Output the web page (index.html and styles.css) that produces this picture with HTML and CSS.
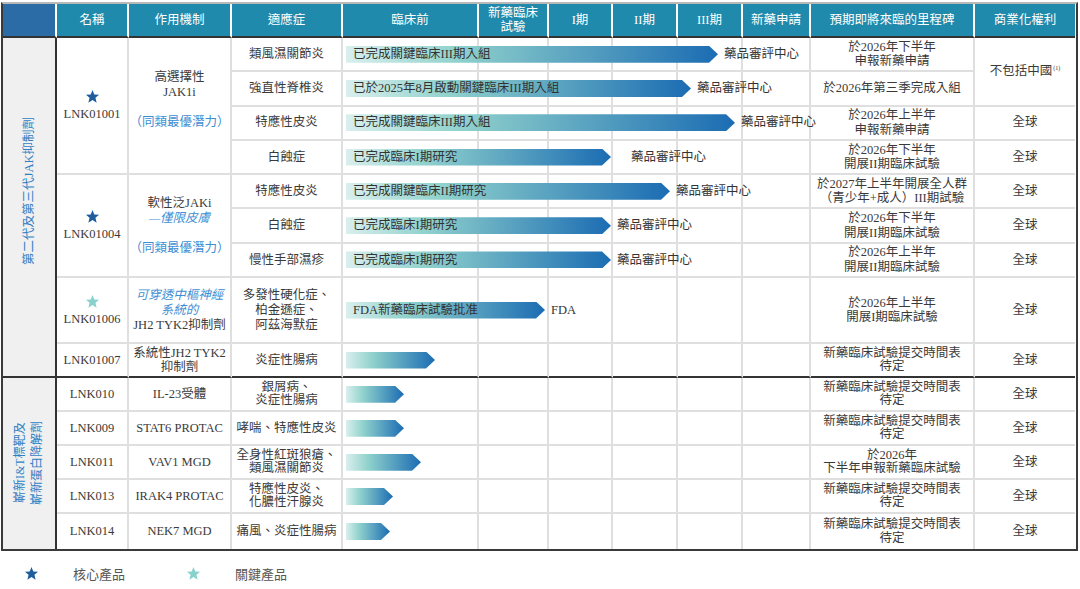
FILE: index.html
```html
<!DOCTYPE html>
<html lang="zh-Hant">
<head>
<meta charset="utf-8">
<title>Pipeline</title>
<link rel="stylesheet" href="styles.css">
</head>
<body>
<div class="page">
  <div class="pipeline">
    <div class="h first"></div>
    <div class="h">名稱</div>
    <div class="h">作用機制</div>
    <div class="h">適應症</div>
    <div class="h">臨床前</div>
    <div class="h">新藥臨床<br>試驗</div>
    <div class="h">I期</div>
    <div class="h">II期</div>
    <div class="h">III期</div>
    <div class="h">新藥申請</div>
    <div class="h">預期即將來臨的里程碑</div>
    <div class="h last">商業化權利</div>

    <!-- row 1 -->
    <div class="c cat cat1"><div class="vt">第二代及第三代JAK抑制劑</div></div>
    <div class="c name s4"><svg class="star" viewBox="0 0 24 24"><polygon class="core" points="12,1.5 14.9,8.6 22.5,9.1 16.7,14 18.6,21.8 12,17.6 5.4,21.8 7.3,14 1.5,9.1 9.1,8.6"/></svg><span>LNK01001</span></div>
    <div class="c mech s4 up"><div>高選擇性<br>JAK1i<br><br><span class="blue">（同類最優潛力）</span></div></div>
    <div class="c">類風濕關節炎</div>
    <div class="c pre"><div class="track"><div class="bar" style="width:372px">已完成關鍵臨床III期入組</div><span class="after">藥品審評中心</span></div></div>
    <div class="c"></div><div class="c"></div><div class="c"></div><div class="c"></div><div class="c"></div>
    <div class="c">於2026年下半年<br>申報新藥申請</div>
    <div class="c end s2"><div>不包括中國<sup>(1)</sup></div></div>

    <!-- row 2 -->
    <div class="c">強直性脊椎炎</div>
    <div class="c pre"><div class="track"><div class="bar" style="width:345px">已於2025年8月啟動關鍵臨床III期入組</div><span class="after">藥品審評中心</span></div></div>
    <div class="c"></div><div class="c"></div><div class="c"></div><div class="c"></div><div class="c"></div>
    <div class="c">於2026年第三季完成入組</div>

    <!-- row 3 -->
    <div class="c">特應性皮炎</div>
    <div class="c pre"><div class="track"><div class="bar" style="width:389px">已完成關鍵臨床III期入組</div><span class="after">藥品審評中心</span></div></div>
    <div class="c"></div><div class="c"></div><div class="c"></div><div class="c"></div><div class="c"></div>
    <div class="c">於2026年上半年<br>申報新藥申請</div>
    <div class="c end">全球</div>

    <!-- row 4 -->
    <div class="c">白蝕症</div>
    <div class="c pre"><div class="track"><div class="bar" style="width:265px">已完成臨床I期研究</div><span class="after far">藥品審評中心</span></div></div>
    <div class="c"></div><div class="c"></div><div class="c"></div><div class="c"></div><div class="c"></div>
    <div class="c">於2026年下半年<br>開展II期臨床試驗</div>
    <div class="c end">全球</div>

    <!-- row 5 -->
    <div class="c name s3"><svg class="star" viewBox="0 0 24 24"><polygon class="core" points="12,1.5 14.9,8.6 22.5,9.1 16.7,14 18.6,21.8 12,17.6 5.4,21.8 7.3,14 1.5,9.1 9.1,8.6"/></svg><span>LNK01004</span></div>
    <div class="c mech s3"><div>軟性泛JAKi<br><span class="blue it">—僅限皮膚</span><br><br><span class="blue">（同類最優潛力）</span></div></div>
    <div class="c">特應性皮炎</div>
    <div class="c pre"><div class="track"><div class="bar" style="width:324px">已完成關鍵臨床II期研究</div><span class="after">藥品審評中心</span></div></div>
    <div class="c"></div><div class="c"></div><div class="c"></div><div class="c"></div><div class="c"></div>
    <div class="c">於2027年上半年開展全人群<br>（青少年+成人）III期試驗</div>
    <div class="c end">全球</div>

    <!-- row 6 -->
    <div class="c">白蝕症</div>
    <div class="c pre"><div class="track"><div class="bar" style="width:265px">已完成臨床I期研究</div><span class="after">藥品審評中心</span></div></div>
    <div class="c"></div><div class="c"></div><div class="c"></div><div class="c"></div><div class="c"></div>
    <div class="c">於2026年下半年<br>開展II期臨床試驗</div>
    <div class="c end">全球</div>

    <!-- row 7 -->
    <div class="c">慢性手部濕疹</div>
    <div class="c pre"><div class="track"><div class="bar" style="width:265px">已完成臨床I期研究</div><span class="after">藥品審評中心</span></div></div>
    <div class="c"></div><div class="c"></div><div class="c"></div><div class="c"></div><div class="c"></div>
    <div class="c">於2026年上半年<br>開展II期臨床試驗</div>
    <div class="c end">全球</div>

    <!-- row 8 -->
    <div class="c name"><svg class="star" viewBox="0 0 24 24"><polygon class="key" points="12,1.5 14.9,8.6 22.5,9.1 16.7,14 18.6,21.8 12,17.6 5.4,21.8 7.3,14 1.5,9.1 9.1,8.6"/></svg><span>LNK01006</span></div>
    <div class="c mech"><div><span class="blue it">可穿透中樞神經<br>系統的</span><br>JH2 TYK2抑制劑</div></div>
    <div class="c tall">多發性硬化症、<br>柏金遜症、<br>阿茲海默症</div>
    <div class="c pre"><div class="track"><div class="bar" style="width:199px">FDA新藥臨床試驗批准</div><span class="after">FDA</span></div></div>
    <div class="c"></div><div class="c"></div><div class="c"></div><div class="c"></div><div class="c"></div>
    <div class="c">於2026年上半年<br>開展I期臨床試驗</div>
    <div class="c end">全球</div>

    <!-- row 9 -->
    <div class="c name sep">LNK01007</div>
    <div class="c mech sep tight"><div>系統性JH2 TYK2<br>抑制劑</div></div>
    <div class="c sep">炎症性腸病</div>
    <div class="c pre sep"><div class="track"><div class="bar" style="width:89px"></div></div></div>
    <div class="c sep"></div><div class="c sep"></div><div class="c sep"></div><div class="c sep"></div><div class="c sep"></div>
    <div class="c sep tight">新藥臨床試驗提交時間表<br>待定</div>
    <div class="c end sep">全球</div>

    <!-- row 10 -->
    <div class="c cat cat2"><div class="vt vt2">嶄新I&amp;T標靶及<br>嶄新蛋白降解劑</div></div>
    <div class="c name">LNK010</div>
    <div class="c mech">IL-23受體</div>
    <div class="c tight">銀屑病、<br>炎症性腸病</div>
    <div class="c pre"><div class="track"><div class="bar" style="width:58px"></div></div></div>
    <div class="c"></div><div class="c"></div><div class="c"></div><div class="c"></div><div class="c"></div>
    <div class="c tight">新藥臨床試驗提交時間表<br>待定</div>
    <div class="c end">全球</div>

    <!-- row 11 -->
    <div class="c name">LNK009</div>
    <div class="c mech">STAT6 PROTAC</div>
    <div class="c">哮喘、特應性皮炎</div>
    <div class="c pre"><div class="track"><div class="bar" style="width:58px"></div></div></div>
    <div class="c"></div><div class="c"></div><div class="c"></div><div class="c"></div><div class="c"></div>
    <div class="c tight">新藥臨床試驗提交時間表<br>待定</div>
    <div class="c end">全球</div>

    <!-- row 12 -->
    <div class="c name">LNK011</div>
    <div class="c mech">VAV1 MGD</div>
    <div class="c tight">全身性紅斑狼瘡、<br>類風濕關節炎</div>
    <div class="c pre"><div class="track"><div class="bar" style="width:75px"></div></div></div>
    <div class="c"></div><div class="c"></div><div class="c"></div><div class="c"></div><div class="c"></div>
    <div class="c tight">於2026年<br>下半年申報新藥臨床試驗</div>
    <div class="c end">全球</div>

    <!-- row 13 -->
    <div class="c name">LNK013</div>
    <div class="c mech">IRAK4 PROTAC</div>
    <div class="c tight">特應性皮炎、<br>化膿性汗腺炎</div>
    <div class="c pre"><div class="track"><div class="bar" style="width:47px"></div></div></div>
    <div class="c"></div><div class="c"></div><div class="c"></div><div class="c"></div><div class="c"></div>
    <div class="c tight">新藥臨床試驗提交時間表<br>待定</div>
    <div class="c end">全球</div>

    <!-- row 14 -->
    <div class="c name lr">LNK014</div>
    <div class="c mech lr">NEK7 MGD</div>
    <div class="c lr">痛風、炎症性腸病</div>
    <div class="c pre lr"><div class="track"><div class="bar" style="width:44px"></div></div></div>
    <div class="c lr"></div><div class="c lr"></div><div class="c lr"></div><div class="c lr"></div><div class="c lr"></div>
    <div class="c lr tight">新藥臨床試驗提交時間表<br>待定</div>
    <div class="c end lr">全球</div>
  </div>

  <div class="legend">
    <svg class="lstar" viewBox="0 0 24 24"><polygon class="core" points="12,1.5 14.9,8.6 22.5,9.1 16.7,14 18.6,21.8 12,17.6 5.4,21.8 7.3,14 1.5,9.1 9.1,8.6"/></svg>
    <span class="ltext">核心產品</span>
    <svg class="lstar second" viewBox="0 0 24 24"><polygon class="key" points="12,1.5 14.9,8.6 22.5,9.1 16.7,14 18.6,21.8 12,17.6 5.4,21.8 7.3,14 1.5,9.1 9.1,8.6"/></svg>
    <span class="ltext">關鍵產品</span>
  </div>
</div>
</body>
</html>
```

FILE: styles.css
```css
* { box-sizing: border-box; }

body {
  margin: 0;
  background: #ffffff;
  font-family: "Liberation Serif", "Noto Sans CJK TC", serif;
  font-size: 12.5px;
  color: #3a3a3a;
}

.page {
  padding: 2px 0 0 1px;
}

.pipeline {
  display: grid;
  width: 1077px;
  grid-template-columns: 54px 72px 103px 111px 136px 70px 64px 65px 65px 68px 164px 100px;
  grid-template-rows: 34px repeat(7, 34.3px) 66px 34px repeat(5, 34.1px);
  border: 2px solid #3a3a3a;
  border-top: 2px solid #b8b8b8;
}

.h {
  background: #1f8aab;
  color: #ffffff;
  border-right: 2px solid #ffffff;
  border-bottom: 2px solid #333333;
  display: flex;
  align-items: center;
  justify-content: center;
  text-align: center;
  line-height: 14px;
}
.h.first { background: #2b6ba6; }
.h.last { border-right: none; }

.c {
  border-right: 2px solid #dfdfdf;
  border-bottom: 2px solid #dfdfdf;
  display: flex;
  align-items: center;
  justify-content: center;
  text-align: center;
  line-height: 14.5px;
  white-space: nowrap;
}
.c.end { border-right: none; }
.c.sep { border-bottom: 2px solid #333333; }
.c.lr { border-bottom: none; }
.c.tight { line-height: 13.5px; }
.c.tall { line-height: 15px; }

.s2 { grid-row: span 2; }
.s3 { grid-row: span 3; }
.s4 { grid-row: span 4; }

.cat {
  background: #f0f0f0;
  border-right: 2px solid #333333;
}
.cat1 {
  grid-row: span 9;
  border-bottom: 2px solid #333333;
  padding-bottom: 32px;
}
.cat2 {
  grid-row: span 5;
  border-bottom: none;
}

.vt {
  writing-mode: vertical-rl;
  text-orientation: sideways;
  transform: rotate(180deg);
  color: #2f7fc3;
  font-size: 12.5px;
  line-height: 14px;
}
.vt2 {
  font-size: 12px;
  line-height: 17px;
}

.name {
  flex-direction: column;
}
.star {
  width: 15px;
  height: 15px;
  margin-bottom: 3px;
}
.core { fill: #1f5d9d; }
.key { fill: #88d2cd; }

.mech { line-height: 15px; }
.mech.up { padding-bottom: 12px; }
.mech.tight { line-height: 14px; }

.blue { color: #3d8ed3; }
.it { font-style: italic; }

sup {
  font-size: 6px;
  line-height: 0;
  vertical-align: 5px;
  margin-left: 1px;
}

.pre {
  justify-content: flex-start;
  padding-left: 3px;
}

.track {
  display: flex;
  align-items: center;
  flex: none;
  white-space: nowrap;
  position: relative;
  z-index: 1;
}

.bar {
  flex: none;
  height: 17px;
  display: flex;
  align-items: center;
  padding-left: 7px;
  color: #333333;
  background: linear-gradient(90deg, #d9efed 0%, #8fd1cc 30%, #1b6cb3 100%);
  clip-path: polygon(0 0, calc(100% - 9px) 0, 100% 50%, calc(100% - 9px) 100%, 0 100%);
}

.after {
  margin-left: 6px;
  color: #333333;
}
.after.far { margin-left: 20px; }

.legend {
  display: flex;
  align-items: center;
  margin-top: 13px;
  padding-left: 23px;
  height: 20px;
  font-size: 13px;
  color: #555555;
}
.lstar {
  width: 15px;
  height: 15px;
}
.lstar.second { margin-left: 61px; }
.ltext { margin-left: 34px; }
```
